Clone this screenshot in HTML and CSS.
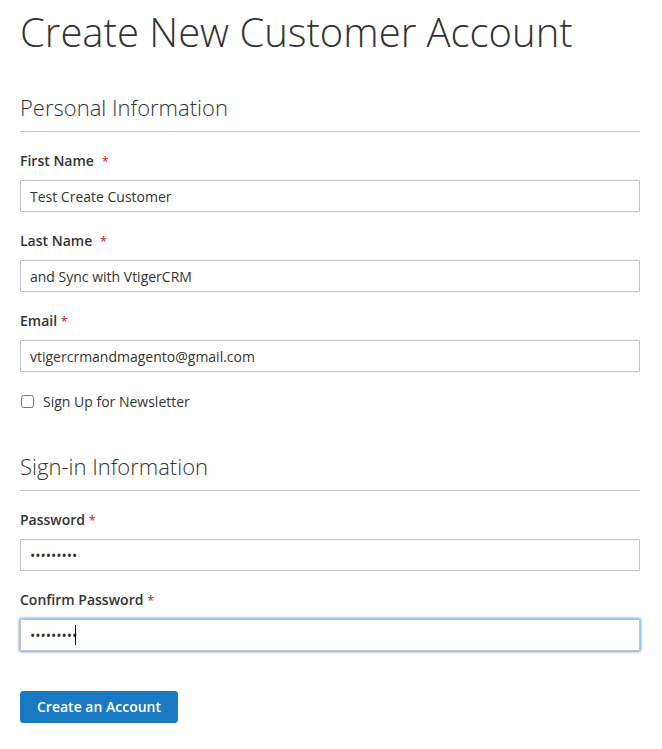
FILE: index.html
```html
<!DOCTYPE html>
<html lang="en">
<head>
<meta charset="utf-8">
<title>Create New Customer Account</title>
<link rel="stylesheet" href="styles.css">
</head>
<body>
<main class="page">
  <h1 class="page-title">Create New Customer Account</h1>
  <form class="form-create">
    <section class="fieldset">
      <div class="legend">Personal Information</div>
      <div class="field">
        <label class="label required" for="firstname">First Name</label>
        <input class="input" id="firstname" type="text" value="Test Create Customer">
      </div>
      <div class="field">
        <label class="label required" for="lastname">Last Name</label>
        <input class="input" id="lastname" type="text" value="and Sync with VtigerCRM">
      </div>
      <div class="field">
        <label class="label required tight" for="email">Email</label>
        <input class="input" id="email" type="text" value="vtigercrmandmagento@gmail.com">
      </div>
      <div class="choice">
        <input class="checkbox" id="newsletter" type="checkbox">
        <label class="choice-label" for="newsletter">Sign Up for Newsletter</label>
      </div>
    </section>
    <section class="fieldset signin">
      <div class="legend">Sign-in Information</div>
      <div class="field">
        <label class="label required tight" for="password">Password</label>
        <input class="input" id="password" type="password" value="123456789">
      </div>
      <div class="field">
        <label class="label required tight" for="confirm">Confirm Password</label>
        <div class="input-wrap">
          <input class="input focused" id="confirm" type="password" value="123456789">
          <span class="caret"></span>
        </div>
      </div>
    </section>
    <div class="actions">
      <button class="primary" type="button">Create an Account</button>
    </div>
  </form>
</main>
</body>
</html>
```
FILE: styles.css
```css
* { box-sizing: border-box; }
html, body { margin: 0; padding: 0; background: #fff; }
body {
  font-family: "Open Sans", "Liberation Sans", sans-serif;
  color: #333;
  font-size: 14px;
}
.page {
  padding: 0 22px 0 20px;
}
.page-title {
  margin: 0;
  padding-top: 8px;
  font-size: 40px;
  font-weight: 300;
  line-height: 48px;
  color: #333;
}
.form-create {
  display: flex;
  flex-direction: column;
}
.fieldset {
  display: flex;
  flex-direction: column;
  margin-top: 37px;
}
.fieldset.signin { margin-top: 40px; }
.legend {
  font-size: 22px;
  font-weight: 300;
  line-height: 28px;
  padding-bottom: 10px;
  border-bottom: 1px solid #c6c6c6;
  margin-bottom: 18px;
}
.field {
  display: flex;
  flex-direction: column;
  margin-bottom: 18px;
}
.label {
  display: block;
  height: 21px;
  padding-top: 1px;
  font-weight: 600;
  font-size: 14px;
  line-height: 20px;
  margin-bottom: 9px;
}
.label.required::after {
  content: "*";
  color: #e02b27;
  margin-left: 8px;
  font-size: 12px;
  line-height: 1;
}
.label.tight::after { margin-left: 4px; }
.input {
  width: 100%;
  height: 32px;
  border: 1px solid #c2c2c2;
  border-radius: 1px;
  padding: 0 9px;
  font-family: "Open Sans", "Liberation Sans", sans-serif;
  font-size: 14px;
  color: #333;
  background: #fff;
  outline: none;
}
.input-wrap { position: relative; }
.input.focused {
  box-shadow: 0 0 3px 1px #68a8e0;
}
.caret {
  position: absolute;
  left: 55px;
  top: 6px;
  width: 1px;
  height: 20px;
  background: #000;
}
.choice {
  display: flex;
  align-items: center;
  gap: 9px;
  margin-top: 2px;
}
.checkbox {
  margin: 0 0 2px 1px;
  width: 13px;
  height: 13px;
}
.choice-label {
  font-size: 14px;
  line-height: 20px;
}
.actions {
  margin-top: 22px;
}
.primary {
  background: #1979c3;
  border: 1px solid #1979c3;
  color: #fff;
  font-family: "Open Sans", "Liberation Sans", sans-serif;
  font-weight: 600;
  font-size: 14px;
  line-height: 20px;
  padding: 5px 15px;
  border-radius: 3px;
  width: 158px;
  height: 32px;
}
```
